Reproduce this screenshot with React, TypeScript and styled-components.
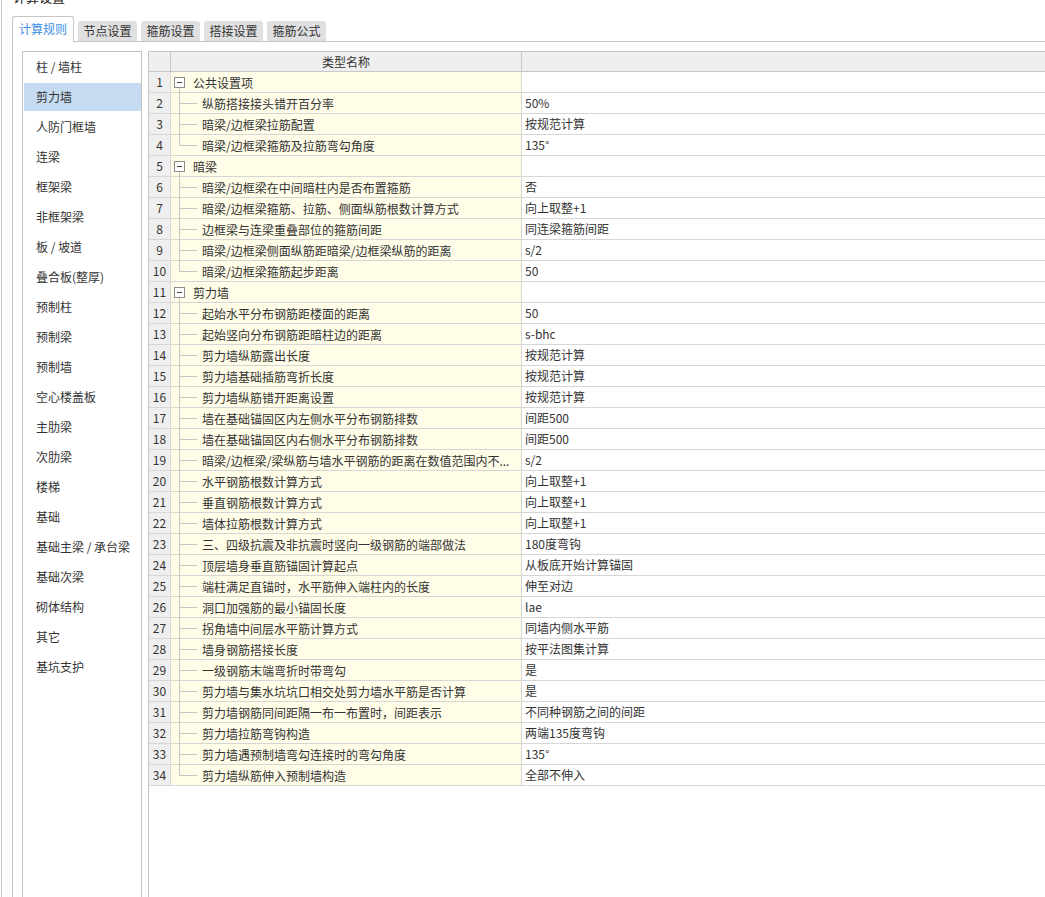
import React from "react";
import styled, { createGlobalStyle } from "styled-components";

const GlobalStyle = createGlobalStyle`
  html, body {
    margin: 0;
    padding: 0;
    overflow: hidden;
    background: #ffffff;
  }
  body {
    font-family: "Noto Sans CJK SC", "Noto Sans", sans-serif;
    font-size: 12px;
    color: #333333;
  }
`;

const Window = styled.div`
  margin-left: 1px;
  border-left: 1px solid #c8c8c8;
  width: 1060px;
  height: 897px;
  overflow: hidden;
`;

const TitleBar = styled.div`
  height: 5px;
  overflow: hidden;
  display: flex;
  align-items: flex-end;
  padding-left: 11px;
`;

const Title = styled.span`
  font-size: 13px;
  line-height: 16px;
  color: #222;
`;

const TabArea = styled.div`
  margin-left: 10px;
  margin-top: 11px;
`;

const TabStrip = styled.div`
  display: flex;
  align-items: flex-end;
  gap: 4px;
  height: 25px;
`;

const Tab = styled.div<{ $active?: boolean }>`
  box-sizing: border-box;
  display: flex;
  align-items: center;
  justify-content: center;
  border-radius: 3px 3px 0 0;
  line-height: 16px;
  ${(p) =>
    p.$active
      ? `
    position: relative;
    z-index: 1;
    width: 62px;
    height: 26px;
    margin-bottom: -1px;
    padding-bottom: 1px;
    background: #ffffff;
    border: 1px solid #c4c4c4;
    border-bottom: none;
    color: #3b8ee3;
  `
      : `
    width: 59px;
    height: 20px;
    background: #e0e0e0;
    color: #333333;
  `}
`;

const Content = styled.div`
  border-top: 1px solid #c4c4c4;
  border-left: 1px solid #c4c4c4;
  padding: 9px 0 0 9px;
  display: flex;
  gap: 6px;
`;

const SideList = styled.div`
  box-sizing: border-box;
  width: 120px;
  height: 880px;
  flex: none;
  border: 1px solid #c4c4c4;
  padding: 1px 0 1px 1px;
  display: flex;
  flex-direction: column;
  gap: 2px;
`;

const SideItem = styled.div<{ $selected?: boolean }>`
  height: 28px;
  flex: none;
  display: flex;
  align-items: center;
  padding-left: 12px;
  white-space: pre;
  line-height: 16px;
  color: #333333;
  background: ${(p) => (p.$selected ? "#c5dbf1" : "transparent")};
`;

const Table = styled.div`
  flex: 1;
  height: 880px;
  border-left: 1px solid #c4c4c4;
  border-top: 1px solid #c4c4c4;
  display: flex;
  flex-direction: column;
`;

const HeaderRow = styled.div`
  display: flex;
  height: 20px;
  flex: none;
  box-sizing: border-box;
  background: #efefef;
  border-bottom: 1px solid #c8c8c8;
`;

const Row = styled.div`
  display: flex;
  height: 21px;
  flex: none;
  box-sizing: border-box;
  border-bottom: 1px solid #d6d6d6;
`;

const NumCell = styled.div<{ $head?: boolean }>`
  box-sizing: border-box;
  width: 22px;
  flex: none;
  border-right: 1px solid ${(p) => (p.$head ? "#c8c8c8" : "#d6d6d6")};
  background: #efefef;
  text-align: center;
  line-height: 20px;
  color: #333333;
`;

const NameCell = styled.div<{ $head?: boolean }>`
  box-sizing: border-box;
  width: 351px;
  flex: none;
  border-right: 1px solid ${(p) => (p.$head ? "#c8c8c8" : "#d6d6d6")};
  background: ${(p) => (p.$head ? "#efefef" : "#fffde8")};
  display: flex;
  align-items: center;
  justify-content: ${(p) => (p.$head ? "center" : "flex-start")};
  line-height: 19px;
  white-space: nowrap;
  overflow: visible;
  color: #333333;
`;

const ValueCell = styled.div`
  flex: 1;
  padding-left: 3px;
  line-height: 20px;
  white-space: nowrap;
  color: #333333;
`;

const TreeSvg = styled.svg`
  display: block;
  flex: none;
  overflow: visible;
  align-self: flex-start;
`;

const NameText = styled.span`
  white-space: nowrap;
`;

type Item = { name: string; value: string };
type Group = { title: string; items: Item[] };

const groups: Group[] = [
  {
    title: "公共设置项",
    items: [
      { name: "纵筋搭接接头错开百分率", value: "50%" },
      { name: "暗梁/边框梁拉筋配置", value: "按规范计算" },
      { name: "暗梁/边框梁箍筋及拉筋弯勾角度", value: "135°" },
    ],
  },
  {
    title: "暗梁",
    items: [
      { name: "暗梁/边框梁在中间暗柱内是否布置箍筋", value: "否" },
      { name: "暗梁/边框梁箍筋、拉筋、侧面纵筋根数计算方式", value: "向上取整+1" },
      { name: "边框梁与连梁重叠部位的箍筋间距", value: "同连梁箍筋间距" },
      { name: "暗梁/边框梁侧面纵筋距暗梁/边框梁纵筋的距离", value: "s/2" },
      { name: "暗梁/边框梁箍筋起步距离", value: "50" },
    ],
  },
  {
    title: "剪力墙",
    items: [
      { name: "起始水平分布钢筋距楼面的距离", value: "50" },
      { name: "起始竖向分布钢筋距暗柱边的距离", value: "s-bhc" },
      { name: "剪力墙纵筋露出长度", value: "按规范计算" },
      { name: "剪力墙基础插筋弯折长度", value: "按规范计算" },
      { name: "剪力墙纵筋错开距离设置", value: "按规范计算" },
      { name: "墙在基础锚固区内左侧水平分布钢筋排数", value: "间距500" },
      { name: "墙在基础锚固区内右侧水平分布钢筋排数", value: "间距500" },
      { name: "暗梁/边框梁/梁纵筋与墙水平钢筋的距离在数值范围内不...", value: "s/2" },
      { name: "水平钢筋根数计算方式", value: "向上取整+1" },
      { name: "垂直钢筋根数计算方式", value: "向上取整+1" },
      { name: "墙体拉筋根数计算方式", value: "向上取整+1" },
      { name: "三、四级抗震及非抗震时竖向一级钢筋的端部做法", value: "180度弯钩" },
      { name: "顶层墙身垂直筋锚固计算起点", value: "从板底开始计算锚固" },
      { name: "端柱满足直锚时，水平筋伸入端柱内的长度", value: "伸至对边" },
      { name: "洞口加强筋的最小锚固长度", value: "lae" },
      { name: "拐角墙中间层水平筋计算方式", value: "同墙内侧水平筋" },
      { name: "墙身钢筋搭接长度", value: "按平法图集计算" },
      { name: "一级钢筋末端弯折时带弯勾", value: "是" },
      { name: "剪力墙与集水坑坑口相交处剪力墙水平筋是否计算", value: "是" },
      { name: "剪力墙钢筋同间距隔一布一布置时，间距表示", value: "不同种钢筋之间的间距" },
      { name: "剪力墙拉筋弯钩构造", value: "两端135度弯钩" },
      { name: "剪力墙遇预制墙弯勾连接时的弯勾角度", value: "135°" },
      { name: "剪力墙纵筋伸入预制墙构造", value: "全部不伸入" },
    ],
  },
];

const sideItems = [
  "柱 / 墙柱",
  "剪力墙",
  "人防门框墙",
  "连梁",
  "框架梁",
  "非框架梁",
  "板 / 坡道",
  "叠合板(整厚)",
  "预制柱",
  "预制梁",
  "预制墙",
  "空心楼盖板",
  "主肋梁",
  "次肋梁",
  "楼梯",
  "基础",
  "基础主梁 / 承台梁",
  "基础次梁",
  "砌体结构",
  "其它",
  "基坑支护",
];

const tabs = ["计算规则", "节点设置", "箍筋设置", "搭接设置", "箍筋公式"];

const LINE = "#c6c6c6";

const GroupMark = () => (
  <TreeSvg width={22} height={20}>
    <rect x={3.5} y={5.5} width={10} height={10} fill="#ffffff" stroke="#8c8c8c" />
    <line x1={6} y1={10.5} x2={11} y2={10.5} stroke="#444" />
    <line x1={8.5} y1={16} x2={8.5} y2={21} stroke={LINE} />
  </TreeSvg>
);

const ChildMark = ({ last }: { last: boolean }) => (
  <TreeSvg width={31} height={20}>
    <line x1={8.5} y1={0} x2={8.5} y2={last ? 10.5 : 21} stroke={LINE} />
    <line x1={8.5} y1={10.5} x2={26} y2={10.5} stroke={LINE} />
  </TreeSvg>
);

export default function App() {
  let n = 0;
  const rows: React.ReactNode[] = [];
  groups.forEach((g) => {
    n += 1;
    rows.push(
      <Row key={`g${n}`}>
        <NumCell>{n}</NumCell>
        <NameCell>
          <GroupMark />
          <NameText>{g.title}</NameText>
        </NameCell>
        <ValueCell />
      </Row>
    );
    g.items.forEach((it, i) => {
      n += 1;
      rows.push(
        <Row key={`r${n}`}>
          <NumCell>{n}</NumCell>
          <NameCell>
            <ChildMark last={i === g.items.length - 1} />
            <NameText>{it.name}</NameText>
          </NameCell>
          <ValueCell>{it.value}</ValueCell>
        </Row>
      );
    });
  });

  return (
    <>
      <GlobalStyle />
      <Window>
        <TitleBar>
          <Title>计算设置</Title>
        </TitleBar>
        <TabArea>
          <TabStrip>
            {tabs.map((t, i) => (
              <Tab key={t} $active={i === 0}>
                {t}
              </Tab>
            ))}
          </TabStrip>
          <Content>
            <SideList>
              {sideItems.map((s, i) => (
                <SideItem key={s} $selected={i === 1}>
                  {s}
                </SideItem>
              ))}
            </SideList>
            <Table>
              <HeaderRow>
                <NumCell $head />
                <NameCell $head>类型名称</NameCell>
                <ValueCell />
              </HeaderRow>
              {rows}
            </Table>
          </Content>
        </TabArea>
      </Window>
    </>
  );
}
